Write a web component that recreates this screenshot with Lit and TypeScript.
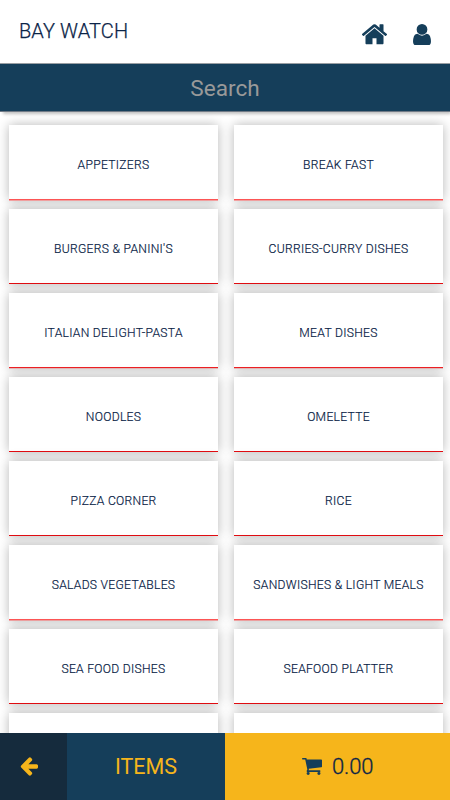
import { LitElement, html, css, svg } from "lit";
import { customElement, property } from "lit/decorators.js";

const ICONS: Record<string, string> = {
  home: "M1472 992v480q0 26-19 45t-45 19h-384v-384h-256v384h-384q-26 0-45-19t-19-45v-480q0-1 .5-3t.5-3l575-474 575 474q1 2 1 6zm223-69l-62 74q-8 9-21 11h-3q-13 0-21-7l-692-577-692 577q-12 8-24 7-13-2-21-11l-62-74q-8-10-7-23.5t11-21.5l719-599q32-26 76-26t76 26l244 204v-195q0-14 9-23t23-9h192q14 0 23 9t9 23v408l219 182q10 8 11 21.5t-7 23.5z",
  user: "M1536 1399q0 109-62.5 187t-150.5 78h-854q-88 0-150.5-78t-62.5-187q0-85 8.5-160.5t31.5-152 58.5-131 94-89 134.5-34.5q131 128 313 128t313-128q76 0 134.5 34.5t94 89 58.5 131 31.5 152 8.5 160.5zm-256-887q0 159-112.5 271.5t-271.5 112.5-271.5-112.5-112.5-271.5 112.5-271.5 271.5-112.5 271.5 112.5 112.5 271.5z",
  back: "M1664 896v128q0 53-32.5 90.5t-84.5 37.5h-704l293 294q38 36 38 90t-38 90l-75 76q-37 37-90 37-52 0-91-37l-651-652q-37-37-37-90 0-52 37-91l651-650q38-38 91-38 52 0 90 38l75 74q38 38 38 91t-38 91l-293 293h704q52 0 84.5 37.5t32.5 90.5z",
  cart: "M704 1536q0 52-38 90t-90 38-90-38-38-90 38-90 90-38 90 38 38 90zm896 0q0 52-38 90t-90 38-90-38-38-90 38-90 90-38 90 38 38 90zm128-1088v512q0 24-16.5 42.5t-40.5 21.5l-1044 122q13 60 13 70 0 16-24 64h920q26 0 45 19t19 45-19 45-45 19h-1024q-26 0-45-19t-19-45q0-11 8-31.5t16-36 21.5-40 15.5-29.5l-177-823h-204q-26 0-45-19t-19-45 19-45 45-19h256q16 0 28.5 6.5t19.5 15.5 13 24.5 8 26 5.5 29.5 4.5 26h1201q26 0 45 19t19 45z",
};

// Each view box is trimmed to the drawn extent of its icon.
const BOXES: Record<string, string> = {
  home: "97 253 1598 1283",
  user: "256 128 1280 1536",
  back: "128 180 1536 1560",
  cart: "64 256 1664 1408",
};

@customElement("app-icon")
class AppIcon extends LitElement {
  @property() name = "home";
  static styles = css`
    :host { display: block; }
    svg { display: block; width: 100%; height: 100%; fill: currentColor; }
  `;
  render() {
    return html`<svg viewBox=${BOXES[this.name]} aria-hidden="true">${svg`<path d=${ICONS[this.name]}></path>`}</svg>`;
  }
}

@customElement("app-root")
class AppRoot extends LitElement {
  categories = [
    "APPETIZERS", "BREAK FAST",
    "BURGERS & PANINI'S", "CURRIES-CURRY DISHES",
    "ITALIAN DELIGHT-PASTA", "MEAT DISHES",
    "NOODLES", "OMELETTE",
    "PIZZA CORNER", "RICE",
    "SALADS VEGETABLES", "SANDWISHES & LIGHT MEALS",
    "SEA FOOD DISHES", "SEAFOOD PLATTER",
    "", "",
  ];

  static styles = css`
    :host {
      display: flex;
      flex-direction: column;
      height: 800px;
      overflow: hidden;
      background: #fff;
      color: #0b2447;
      font-family: Roboto, "Liberation Sans", sans-serif;
    }
    .header {
      flex: none;
      display: flex;
      align-items: center;
      box-sizing: border-box;
      height: 64px;
      padding: 0 19px;
      border-bottom: 1px solid #999ea3;
    }
    .title { flex: 1; font-size: 20px; line-height: 24px; font-weight: 300; letter-spacing: 0.1px; margin-top: -1px; -webkit-text-stroke: 0.25px; }
    .icon { flex: none; color: #153e5a; }
    .home { width: 25px; height: 20.5px; margin: 6px 26px 0 0; }
    .user { width: 18px; height: 21.5px; margin-top: 6px; }
    .search {
      flex: none;
      display: flex;
      align-items: center;
      justify-content: center;
      box-sizing: border-box;
      height: 48px;
      padding-top: 2px;
      background: #153e5a;
      color: #999;
      font-size: 22.6px;
      border-bottom: 1px solid #707a86;
      box-shadow: 2px 3px 3px -1px rgba(0, 0, 0, 0.25);
      position: relative;
    }
    .grid {
      flex: 1;
      min-height: 0;
      overflow: hidden;
      display: grid;
      grid-template-columns: 209px 209px;
      grid-auto-rows: 75px;
      gap: 9px 16px;
      padding: 13px 7px 0 9px;
    }
    .card {
      box-sizing: border-box;
      display: flex;
      align-items: center;
      justify-content: center;
      padding-top: 5px;
      background: #fff;
      border-bottom: 1px solid #e20d12;
      box-shadow: 0 0 11px rgba(0, 0, 0, 0.29);
      font-size: 12.1px;
      font-weight: 300;
      letter-spacing: 0.3px;
      -webkit-text-stroke: 0.2px;
      white-space: nowrap;
    }
    .card:nth-child(-n + 2) { border-bottom-color: #f55; box-shadow: 0 1px 0 #f5a3a3, 0 0 11px rgba(0, 0, 0, 0.29); }
    .card:nth-child(5), .card:nth-child(6) { border-bottom-color: #ee2024; box-shadow: 0 1px 0 #e6b9b9, 0 0 11px rgba(0, 0, 0, 0.29); }
    .card:nth-child(11), .card:nth-child(12) { border-bottom-color: #f55; box-shadow: 0 1px 0 #f0a3a3, 0 0 11px rgba(0, 0, 0, 0.29); }
    .footer {
      flex: none;
      display: flex;
      height: 67px;
      position: relative;
      font-size: 22px;
    }
    .back { width: 67px; background: #152b3d; color: #f6b51b; display: flex; align-items: center; box-sizing: border-box; padding-left: 20px; }
    .arrow { width: 18px; height: 19px; }
    .items { width: 158px; background: #153e5a; color: #f6b51b; display: flex; align-items: center; justify-content: center; box-sizing: border-box; font-size: 21.5px; }
    .total { width: 225px; background: #f6b51b; display: flex; align-items: center; box-sizing: border-box; padding-left: 77px; gap: 10px; }
    .total span { font-weight: 300; letter-spacing: -0.1px; -webkit-text-stroke: 0.3px; }
    .cart { width: 20px; height: 17px; color: #153e5a; }
  `;

  render() {
    return html`
      <header class="header">
        <div class="title">BAY WATCH</div>
        <app-icon class="icon home" name="home"></app-icon>
        <app-icon class="icon user" name="user"></app-icon>
      </header>
      <div class="search"><span>Search</span></div>
      <main class="grid">
        ${this.categories.map((c) => html`<div class="card">${c}</div>`)}
      </main>
      <footer class="footer">
        <div class="back"><app-icon class="arrow" name="back"></app-icon></div>
        <div class="items">ITEMS</div>
        <div class="total"><app-icon class="cart" name="cart"></app-icon><span>0.00</span></div>
      </footer>
    `;
  }
}
